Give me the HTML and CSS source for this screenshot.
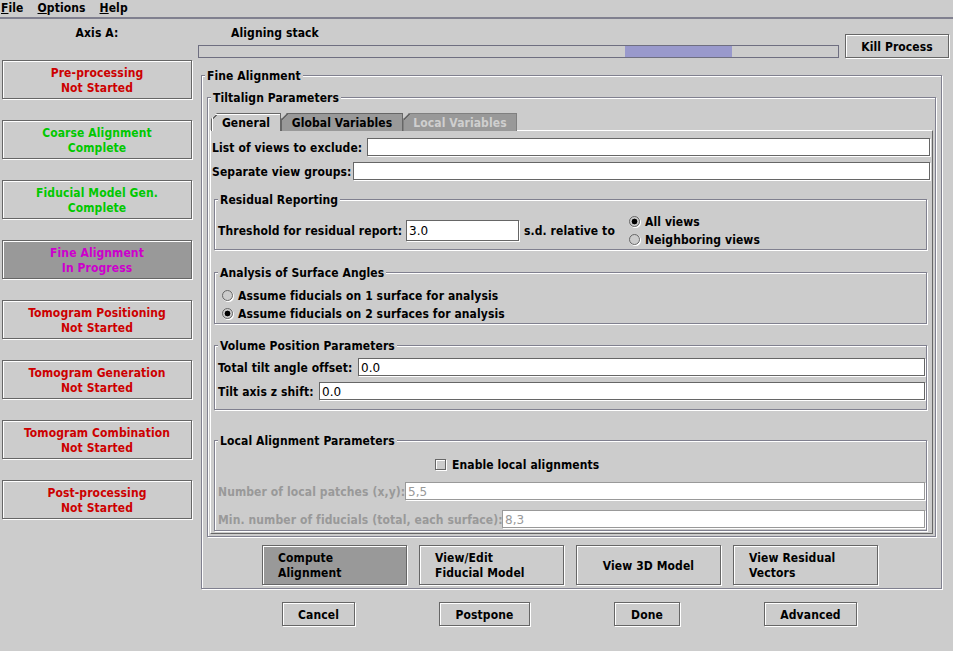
FILE: index.html
```html
<!DOCTYPE html>
<html>
<head>
<meta charset="utf-8">
<title>eTomo - Fine Alignment</title>
<link rel="stylesheet" href="styles.css">
</head>
<body>
<div class="menubar">
  <span class="menu"><u>F</u>ile</span>
  <span class="menu"><u>O</u>ptions</span>
  <span class="menu"><u>H</u>elp</span>
</div>
<div class="main">
  <div class="sidebar">
    <div class="axis-label">Axis A:</div>
    <div class="btn proc-btn red">Pre-processing<br>Not Started</div>
    <div class="btn proc-btn green">Coarse Alignment<br>Complete</div>
    <div class="btn proc-btn green">Fiducial Model Gen.<br>Complete</div>
    <div class="btn proc-btn magenta active">Fine Alignment<br>In Progress</div>
    <div class="btn proc-btn red">Tomogram Positioning<br>Not Started</div>
    <div class="btn proc-btn red">Tomogram Generation<br>Not Started</div>
    <div class="btn proc-btn red">Tomogram Combination<br>Not Started</div>
    <div class="btn proc-btn red">Post-processing<br>Not Started</div>
  </div>
  <div class="content">
    <div class="top-row">
      <div class="progress-area">
        <div class="status">Aligning stack</div>
        <div class="progress"><div class="progress-fill" style="left:426px;width:107px"></div></div>
      </div>
      <div class="btn kill">Kill Process</div>
    </div>

    <div class="frame fine">
      <div class="frame-title">Fine Alignment</div>
      <div class="frame tiltalign">
        <div class="frame-title">Tiltalign Parameters</div>
        <div class="tabs">
          <div class="tab selected w-general">General</div>
          <div class="tab w-global">Global Variables</div>
          <div class="tab disabled w-local">Local Variables</div>
        </div>
        <div class="tab-panel">
          <div class="field-row">
            <span class="label w155">List of views to exclude:</span>
            <div class="field"></div>
          </div>
          <div class="field-row gap6">
            <span class="label w141">Separate view groups:</span>
            <div class="field"></div>
          </div>

          <div class="frame sub residual">
            <div class="frame-title">Residual Reporting</div>
            <div class="residual-row">
              <span class="label w188">Threshold for residual report:</span>
              <div class="field short">3.0</div>
              <span class="label rel">s.d. relative to</span>
              <div class="radio-group">
                <div class="radio"><span class="dot on"></span>All views</div>
                <div class="radio"><span class="dot"></span>Neighboring views</div>
              </div>
            </div>
          </div>

          <div class="frame sub analysis">
            <div class="frame-title">Analysis of Surface Angles</div>
            <div class="radio"><span class="dot"></span>Assume fiducials on 1 surface for analysis</div>
            <div class="radio"><span class="dot on"></span>Assume fiducials on 2 surfaces for analysis</div>
          </div>

          <div class="frame sub volume">
            <div class="frame-title">Volume Position Parameters</div>
            <div class="field-row">
              <span class="label w140">Total tilt angle offset:</span>
              <div class="field">0.0</div>
            </div>
            <div class="field-row gap6">
              <span class="label w101">Tilt axis z shift:</span>
              <div class="field">0.0</div>
            </div>
          </div>

          <div class="frame sub local">
            <div class="frame-title">Local Alignment Parameters</div>
            <div class="check-row"><span class="checkbox"></span>Enable local alignments</div>
            <div class="field-row gap9 off">
              <span class="label w187">Number of local patches (x,y):</span>
              <div class="field">5,5</div>
            </div>
            <div class="field-row gap10 off">
              <span class="label w284">Min. number of fiducials (total, each surface):</span>
              <div class="field">8,3</div>
            </div>
          </div>
        </div>
      </div>

      <div class="action-row">
        <div class="btn action multi active">Compute<br>Alignment</div>
        <div class="btn action multi">View/Edit<br>Fiducial Model</div>
        <div class="btn action">View 3D Model</div>
        <div class="btn action multi">View Residual<br>Vectors</div>
      </div>
    </div>

    <div class="bottom-row">
      <div class="btn b-cancel">Cancel</div>
      <div class="btn b-postpone">Postpone</div>
      <div class="btn b-done">Done</div>
      <div class="btn b-advanced">Advanced</div>
    </div>
  </div>
</div>
</body>
</html>
```

FILE: styles.css
```css
* { box-sizing: border-box; }
html, body { margin: 0; padding: 0; }
body {
  width: 953px;
  height: 651px;
  overflow: hidden;
  background: #cccccc;
  color: #000;
  font-family: "DejaVu Sans Condensed", "DejaVu Sans", sans-serif;
  font-stretch: condensed;
  font-weight: bold;
  font-size: 12px;
  line-height: 15px;
  letter-spacing: 0.1px;
}

/* menu bar */
.menubar {
  height: 19px;
  padding-top: 1px;
  border-bottom: 2px solid #80808f;
  display: flex;
  gap: 14px;
  padding-left: 1px;
}
.menu u { text-decoration: underline; text-underline-offset: 1px; }

.main { display: flex; }

/* sidebar */
.sidebar { width: 198px; padding-left: 2px; }
.axis-label {
  width: 190px;
  height: 41px;
  padding-top: 7px;
  text-align: center;
}

.btn {
  border: 1px solid #666;
  box-shadow: inset 1px 1px 0 #fff, 1px 1px 0 #fff;
  background: #cccccc;
  display: flex;
  align-items: center;
  justify-content: center;
  text-align: center;
  padding-top: 2px;
}
.btn.active { background: #999999; }

.proc-btn {
  width: 190px;
  height: 39px;
  margin-bottom: 21px;
}
.red { color: #cc0000; }
.green { color: #00c800; }
.magenta { color: #cc00cc; }

/* right side */
.content { width: 755px; }
.top-row { display: flex; height: 56px; }
.progress-area { width: 641px; }
.status { height: 26px; padding-top: 7px; padding-left: 33px; }
.progress {
  position: relative;
  height: 13px;
  border: 1px solid #6e6e80;
  background: #cccccc;
}
.progress-fill {
  position: absolute;
  top: 0;
  bottom: 0;
  background: #9999cc;
}
.kill { margin-left: 6px; margin-top: 15px; width: 104px; height: 24px; }

/* titled frames */
.frame {
  position: relative;
  border: 1px solid #80808f;
  box-shadow: inset 1px 1px 0 #fff, 1px 1px 0 #fff;
}
.frame-title {
  position: absolute;
  top: -7px;
  left: 3px;
  padding: 0 2px;
  background: #cccccc;
  white-space: nowrap;
}

.fine {
  margin-left: 3px;
  width: 741px;
  padding: 21px 5px 3px 5px;
}
.tiltalign { padding: 15px 0 2px 0; }

/* tabs */
.tabs {
  display: flex;
  height: 18px;
  margin-left: 3px;
  margin-bottom: -1px;
}
.tab {
  height: 18px;
  padding-top: 1px;
  display: flex;
  align-items: center;
  justify-content: center;
  border: 1px solid #666;
  border-bottom: none;
  clip-path: polygon(0 6px, 6px 0, 100% 0, 100% 100%, 0 100%);
  background: linear-gradient(to bottom right, transparent 40%, #666 40%, #666 56%, transparent 56%) 0 0 / 8px 8px no-repeat border-box, #999999;
}
.tab.selected {
  position: relative;
  z-index: 1;
  background-color: #cccccc;
  box-shadow: inset 1px 1px 0 #fff;
}
.tab.disabled { color: #cfcfcf; border-color: #808080; }
.w-general { width: 70px; }
.w-global { width: 122px; }
.w-local { width: 114px; }

.tab-panel {
  margin: 0 2px;
  border: 1px solid;
  border-color: #fff #666 #666 #fff;
  padding: 7px 0 2px 0;
}

.field-row {
  display: flex;
  align-items: center;
  height: 18px;
  padding-left: 1px;
  padding-right: 2px;
}
.gap6 { margin-top: 6px; }
.gap9 { margin-top: 9px; }
.gap10 { margin-top: 10px; }

.label { white-space: nowrap; flex: none; padding-top: 2px; }
.w101 { width: 101px; }
.w140 { width: 140px; }
.w141 { width: 141px; }
.w155 { width: 155px; }
.w187 { width: 187px; }
.w188 { width: 188px; }
.w284 { width: 284px; }

.field {
  flex: 1;
  height: 18px;
  background: #fff;
  border: 1px solid #666;
  box-shadow: 1px 1px 0 #fff;
  font-family: "DejaVu Sans", sans-serif;
  font-stretch: normal;
  font-weight: normal;
  letter-spacing: 0;
  line-height: 16px;
  padding-top: 1px;
  padding-left: 2px;
  color: #000;
  overflow: hidden;
}
.field.short { flex: none; width: 113px; height: 21px; line-height: 18px; }

.off { color: #999999; }
.off .field { border-color: #999999; color: #999999; }

/* sub frames inside the tab */
.sub { margin-left: 3px; margin-right: 5px; }
.residual { margin-top: 19px; padding: 12px 3px 1px 3px; }
.residual-row { display: flex; align-items: center; height: 36px; }
.rel { width: 105px; margin-left: 5px; }

.analysis { margin-top: 22px; padding: 13px 0 1px 7px; }
.volume { margin-top: 21px; padding: 12px 0 9px 3px; }
.volume .field-row { padding-left: 0; padding-right: 1px; }
.local { margin-top: 30px; padding: 14px 0 2px 3px; }
.local .field-row { padding-left: 0; padding-right: 1px; }

.radio-group { display: flex; flex-direction: column; }
.radio {
  display: flex;
  align-items: center;
  height: 18px;
  padding-top: 2px;
  white-space: nowrap;
}
.dot {
  width: 11px;
  height: 11px;
  margin-top: -2px;
  margin-right: 5px;
  border: 1px solid #666;
  border-radius: 50%;
  box-shadow: 1px 1px 0 #fff;
  background: #cccccc;
  flex: none;
}
.dot.on { background: radial-gradient(circle, #000 2.6px, #cccccc 3.2px); }

.check-row {
  display: flex;
  align-items: center;
  height: 18px;
  padding-top: 2px;
  padding-left: 217px;
}
.checkbox {
  width: 11px;
  height: 11px;
  margin-top: -2px;
  margin-right: 6px;
  border: 1px solid #666;
  box-shadow: 1px 1px 0 #fff, inset 1px 1px 0 #fff;
  background: #cccccc;
  flex: none;
}

/* action buttons */
.action-row {
  display: flex;
  gap: 12px;
  margin-top: 8px;
  padding-left: 55px;
}
.action { width: 145px; height: 40px; }
.action.multi { justify-content: flex-start; text-align: left; padding-left: 15px; }

.bottom-row {
  display: flex;
  gap: 84px;
  margin-top: 13px;
  padding-left: 84px;
}
.bottom-row .btn { height: 24px; }
.b-cancel { width: 73px; }
.b-postpone { width: 91px; }
.b-done { width: 66px; }
.b-advanced { width: 93px; }
```
